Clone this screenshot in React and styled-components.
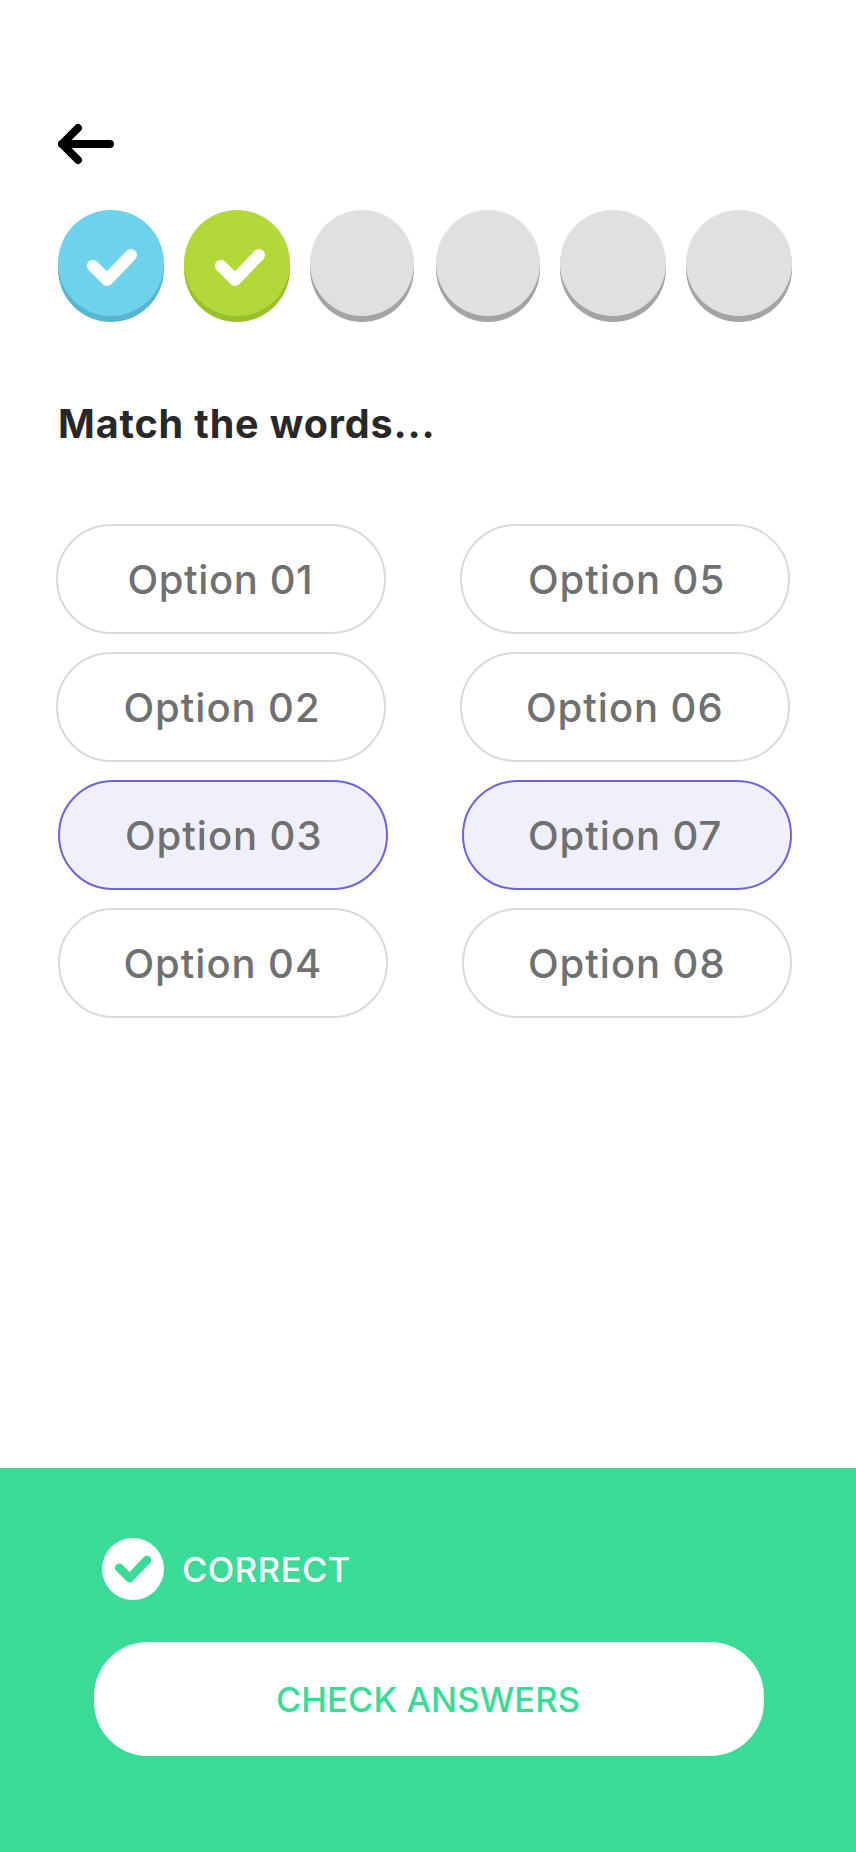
import React from 'react';
import styled, { createGlobalStyle } from 'styled-components';

const GlobalStyle = createGlobalStyle`
  *, *::before, *::after { box-sizing: border-box; }
  body {
    margin: 0;
    background: #fff;
    font-family: Inter, 'Liberation Sans', sans-serif;
  }
  button { font-family: inherit; cursor: pointer; }
`;

const Screen = styled.div`
  display: flex;
  flex-direction: column;
  width: 100%;
  max-width: 856px;
  height: 1852px;
  background: #fff;
`;

const Content = styled.main`
  flex: 1;
  display: flex;
  flex-direction: column;
  align-items: flex-start;
  padding: 123px 64px 0 56px;
`;

const BackButton = styled.button`
  display: flex;
  margin: 0 0 0 2px;
  padding: 0;
  border: 0;
  background: none;
  color: #000;
`;

const Steps = styled.div`
  display: flex;
  gap: 20px;
  margin: 45px 0 0 2px;
`;

const stepColors = {
  blue: ['#6ed2ec', '#57b5d1'],
  green: ['#b2d939', '#9bc02e'],
  idle: ['#e0e0e0', '#a5a4a5'],
};

const Step = styled.div`
  display: flex;
  width: ${p => (p.$narrow ? 104 : 106)}px;
  height: 106px;
  border-radius: 50%;
  background: ${p => stepColors[p.$tone][0]};
  box-shadow: 0 6px 0 ${p => stepColors[p.$tone][1]};

  &:nth-child(3) { margin-right: 2px; }
`;

const StepCheck = styled.svg`
  display: block;
  width: 52px;
  height: 38px;
  margin: 39px 0 0 ${p => p.$inset}px;
`;

const Title = styled.h1`
  margin: 80px 0 0 2px;
  height: 56px;
  font-size: 39.5px;
  font-weight: 700;
  line-height: 56px;
  letter-spacing: 0.87px;
  color: #282828;
  white-space: nowrap;
`;

const Options = styled.div`
  display: flex;
  gap: 74px;
  margin-top: 72px;
`;

const Column = styled.div`
  display: flex;
  flex-direction: column;
  gap: 18px;
  width: 330px;
`;

const Option = styled.button`
  display: flex;
  align-items: center;
  flex-shrink: 0;
  width: 330px;
  height: 110px;
  margin: 0 0 0 ${p => (p.$indented ? 2 : 0)}px;
  padding: 0 0 0 ${p => p.$pad}px;
  border: 2px solid ${p => (p.$selected ? '#6c63e0' : '#dadada')};
  border-radius: 55px;
  background: ${p => (p.$selected ? '#f0effc' : '#fff')};
  color: #707070;
  font-size: 40px;
  font-weight: 500;
  letter-spacing: ${p => p.$tracking || 0.95}px;
  white-space: nowrap;
`;

const Result = styled.footer`
  display: flex;
  flex-direction: column;
  align-items: flex-start;
  height: 384px;
  padding: 70px 92px 0 94px;
  background: #3adb96;
`;

const Verdict = styled.div`
  display: flex;
  align-items: center;
  gap: 18px;
  height: 62px;
  margin-left: 8px;
  color: #fff;
  font-size: 34.5px;
  font-weight: 500;
  letter-spacing: 0.55px;
`;

const Badge = styled.span`
  display: flex;
  align-items: center;
  justify-content: center;
  width: 62px;
  height: 62px;
  border-radius: 50%;
  background: #fff;
  color: #3adb96;
`;

const CheckButton = styled.button`
  width: 670px;
  height: 114px;
  margin-top: 42px;
  padding: 0 2px 0 0;
  border: 0;
  border-radius: 54px;
  background: #fff;
  color: #3adb96;
  font-size: 34.5px;
  font-weight: 500;
  letter-spacing: 0.1px;
`;

const steps = [
  { tone: 'blue', inset: 28 },
  { tone: 'green', inset: 30 },
  { tone: 'idle', narrow: true },
  { tone: 'idle', narrow: true },
  { tone: 'idle' },
  { tone: 'idle' },
];

const columns = [
  [
    { label: 'Option 01', pad: 69.5, tracking: 0.6 },
    { label: 'Option 02', pad: 65.5 },
    { label: 'Option 03', pad: 65, selected: true, indented: true },
    { label: 'Option 04', pad: 63.5, indented: true },
  ],
  [
    { label: 'Option 05', pad: 66 },
    { label: 'Option 06', pad: 64 },
    { label: 'Option 07', pad: 64, selected: true, indented: true },
    { label: 'Option 08', pad: 64, indented: true },
  ],
];

export default function App() {
  return (
    <Screen>
      <GlobalStyle />
      <Content>
        <BackButton aria-label="Back">
          <svg width="56" height="42" viewBox="0 0 56 42" fill="none" stroke="currentColor" strokeWidth="8" strokeLinecap="round" strokeLinejoin="round">
            <path d="M52 21H4M20 5L4 21L20 37" />
          </svg>
        </BackButton>
        <Steps>
          {steps.map((s, i) => (
            <Step key={i} $tone={s.tone} $narrow={s.narrow}>
              {s.inset && (
                <StepCheck $inset={s.inset} viewBox="0 0 52 38" fill="none" stroke="#fff" strokeWidth="12" strokeLinecap="round" strokeLinejoin="round">
                  <path d="M6.8 16.7L21 31L45 6" />
                </StepCheck>
              )}
            </Step>
          ))}
        </Steps>
        <Title>Match the words...</Title>
        <Options>
          {columns.map((items, i) => (
            <Column key={i}>
              {items.map(o => (
                <Option key={o.label} $pad={o.pad} $tracking={o.tracking} $selected={o.selected} $indented={o.indented}>
                  {o.label}
                </Option>
              ))}
            </Column>
          ))}
        </Options>
      </Content>
      <Result>
        <Verdict>
          <Badge>
            <svg width="62" height="62" viewBox="0 0 62 62" fill="none" stroke="currentColor" strokeWidth="8.6" strokeLinecap="round" strokeLinejoin="round">
              <path d="M17.2 29.7L27.7 40.1L45 22" />
            </svg>
          </Badge>
          CORRECT
        </Verdict>
        <CheckButton>CHECK ANSWERS</CheckButton>
      </Result>
    </Screen>
  );
}
